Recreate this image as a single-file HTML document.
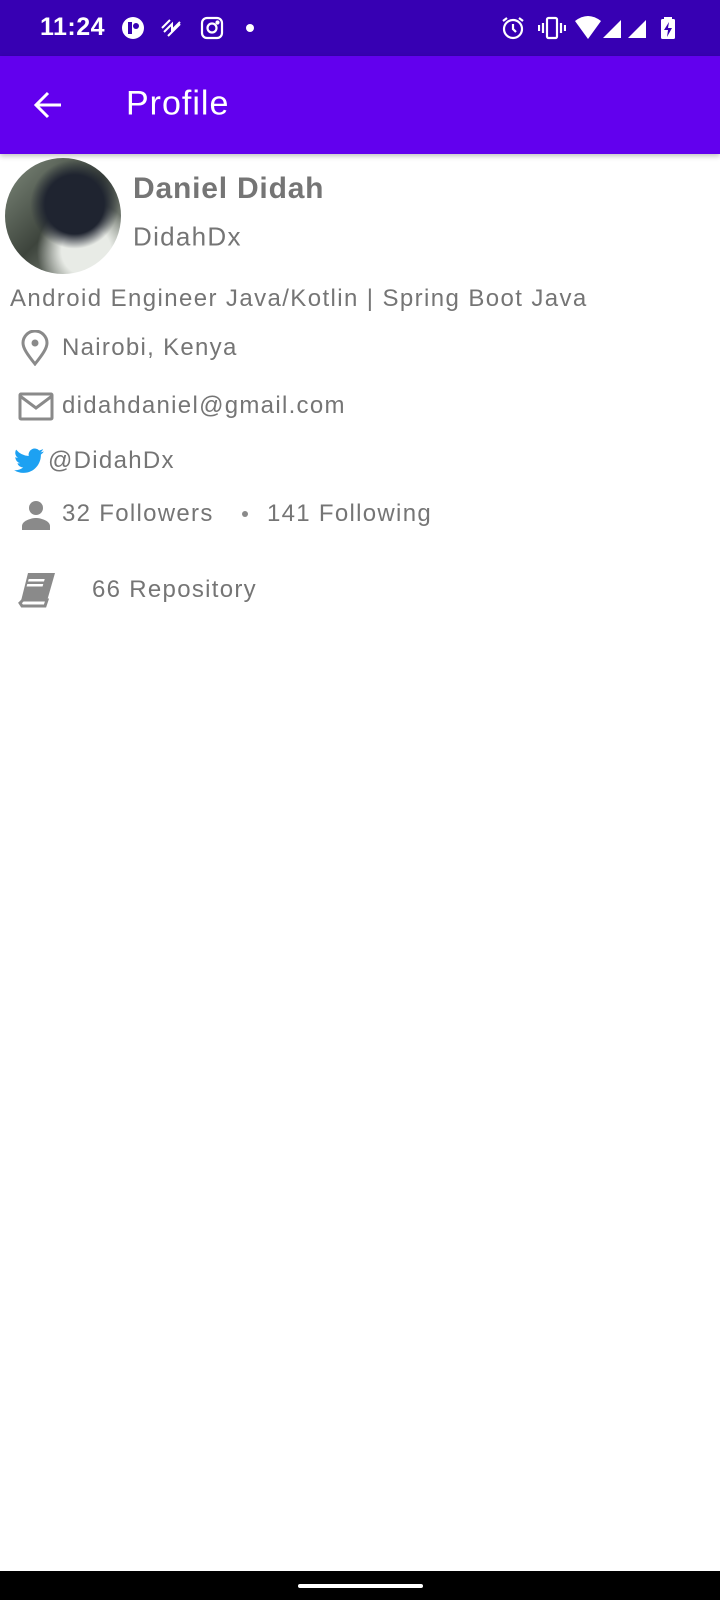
<!DOCTYPE html>
<html><head><meta charset="utf-8"><style>
*{margin:0;padding:0;box-sizing:border-box}
body{width:720px;height:1600px;background:#fff;position:relative;overflow:hidden;font-family:"Liberation Sans",sans-serif;color:#757575}
.a{position:absolute;white-space:nowrap}
#sb{position:absolute;left:0;top:0;width:720px;height:56px;background:#3700b3;color:#fff}
#ab{position:absolute;left:0;top:56px;width:720px;height:98px;background:#6200ee;box-shadow:0 2px 5px rgba(0,0,0,.25)}
.t{font-size:24px;letter-spacing:1.3px;transform:translateY(-50%)}
</style></head><body>
<div id="sb">
 <div class="a" style="left:40px;top:13px;font-size:25px;font-weight:bold;color:#fff;letter-spacing:.5px">11:24</div>
 <svg class="a" style="left:121px;top:16px" width="24" height="24"><circle cx="12" cy="12" r="11" fill="#fff"/><rect x="7" y="6" width="4" height="12" fill="#3700b3"/><circle cx="15" cy="10" r="3" fill="#3700b3"/></svg>
 <svg class="a" style="left:160px;top:18px" width="24" height="20" fill="none" stroke="#fff" stroke-width="2"><path d="M2 10l8-8M4 14l8-8 0 6 8-8M8 18l12-12"/></svg>
 <svg class="a" style="left:200px;top:16px" width="24" height="24" fill="none" stroke="#fff" stroke-width="2.2"><rect x="2" y="2" width="20" height="20" rx="5"/><circle cx="12" cy="12" r="4.5"/><circle cx="17.5" cy="6.5" r="1" fill="#fff"/></svg>
 <div class="a" style="left:246px;top:24px;width:8px;height:8px;border-radius:50%;background:#fff"></div>
 <svg class="a" style="left:500px;top:15px" width="26" height="26" fill="none" stroke="#fff" stroke-width="2.2"><circle cx="13" cy="14" r="9"/><path d="M13 9v5l3 3M3 6l4-3M23 6l-4-3"/></svg>
 <svg class="a" style="left:538px;top:16px" width="28" height="24" fill="none" stroke="#fff" stroke-width="2.2"><rect x="9" y="2" width="10" height="20" rx="1.5"/><path d="M5 7v10M23 7v10M1 9v6M27 9v6"/></svg>
 <svg class="a" style="left:575px;top:16px" width="100" height="24" fill="#fff"><path d="M0 5Q13-5 26 5L13 23Z"/><path d="M28 22L46 4V22Z"/><path d="M53 22L71 4V22Z"/><rect x="89" y="1" width="8" height="3"/><rect x="86" y="3" width="14" height="20" rx="1.5"/><path d="M94 6l-5 8h4l-1 7 5-9h-4z" fill="#3700b3"/></svg>
</div>
<div id="ab">
 <svg class="a" style="left:33px;top:34px" width="30" height="30" fill="none" stroke="#fff" stroke-width="3"><path d="M28 15H4M15 3L3 15l12 12"/></svg>
 <div class="a" style="left:126px;top:48px;font-size:34px;color:#fff;transform:translateY(-50%);letter-spacing:1px">Profile</div>
</div>
<div class="a" style="left:5px;top:158px;width:116px;height:116px;border-radius:50%;background:radial-gradient(circle at 60% 40%,#1f2430 0 30%,transparent 45%),radial-gradient(circle at 70% 80%,#e8ebe6 0 20%,transparent 40%),linear-gradient(135deg,#7f8a7c,#3d443c 50%,#a3aaa0)"></div>
<div class="a" style="left:133px;top:189px;font-size:30px;font-weight:bold;transform:translateY(-50%);letter-spacing:.8px">Daniel Didah</div>
<div class="a" style="left:133px;top:237px;font-size:26px;transform:translateY(-50%);letter-spacing:1.3px">DidahDx</div>
<div class="a t" style="left:10px;top:299px;letter-spacing:1.4px">Android Engineer Java/Kotlin | Spring Boot Java</div>
<svg class="a" style="left:21px;top:330px" width="28" height="36" fill="none" stroke="#8a8a8a" stroke-width="3"><path d="M14 34C6 24 2 18 2 13a12 12 0 0 1 24 0c0 5-4 11-12 21z"/><circle cx="14" cy="13" r="3.5" fill="#8a8a8a" stroke="none"/></svg>
<div class="a t" style="left:62px;top:348px">Nairobi, Kenya</div>
<svg class="a" style="left:18px;top:392px" width="36" height="30" fill="none" stroke="#8a8a8a" stroke-width="3"><rect x="2" y="2" width="32" height="25" rx="1"/><path d="M2 4l16 12 16-12"/></svg>
<div class="a t" style="left:62px;top:406px">didahdaniel@gmail.com</div>
<svg class="a" style="left:14px;top:448px" width="30" height="26" viewBox="0 0 24 20" fill="#1da1f2"><path d="M24 2.3a10 10 0 0 1-2.8.8A5 5 0 0 0 23.3.4a10 10 0 0 1-3.1 1.2A4.9 4.9 0 0 0 11.8 6 14 14 0 0 1 1.7.9a4.9 4.9 0 0 0 1.5 6.6A4.9 4.9 0 0 1 1 6.9a4.9 4.9 0 0 0 3.9 4.8 5 5 0 0 1-2.2.1 4.9 4.9 0 0 0 4.6 3.4A9.9 9.9 0 0 1 0 17.3 14 14 0 0 0 7.5 19.5c9 0 14-7.5 14-14v-.6A10 10 0 0 0 24 2.3z"/></svg>
<div class="a t" style="left:48px;top:461px">@DidahDx</div>
<svg class="a" style="left:21px;top:500px" width="30" height="30" fill="#8a8a8a"><circle cx="15" cy="8" r="7"/><path d="M1 30v-4c0-5 9-8 14-8s14 3 14 8v4z"/></svg>
<div class="a t" style="left:62px;top:514px">32 Followers</div>
<div class="a" style="left:242px;top:511px;width:6px;height:6px;border-radius:50%;background:#8a8a8a"></div>
<div class="a t" style="left:267px;top:514px">141 Following</div>
<svg class="a" style="left:17px;top:571px" width="40" height="38" fill="#8a8a8a"><path d="M11 2h27l-8 28H4z"/><path d="M3 32l3-3h24l-2 6H5z" fill="none" stroke="#8a8a8a" stroke-width="3"/><rect x="14" y="8" width="16" height="2.5" fill="#fff" transform="skewX(-16)"/><rect x="14" y="13" width="16" height="2.5" fill="#fff" transform="skewX(-16)"/></svg>
<div class="a t" style="left:92px;top:590px">66 Repository</div>
<div class="a" style="left:0;top:1571px;width:720px;height:29px;background:#000"></div>
<div class="a" style="left:298px;top:1584px;width:125px;height:4px;border-radius:2px;background:#fff"></div>
</body></html>
